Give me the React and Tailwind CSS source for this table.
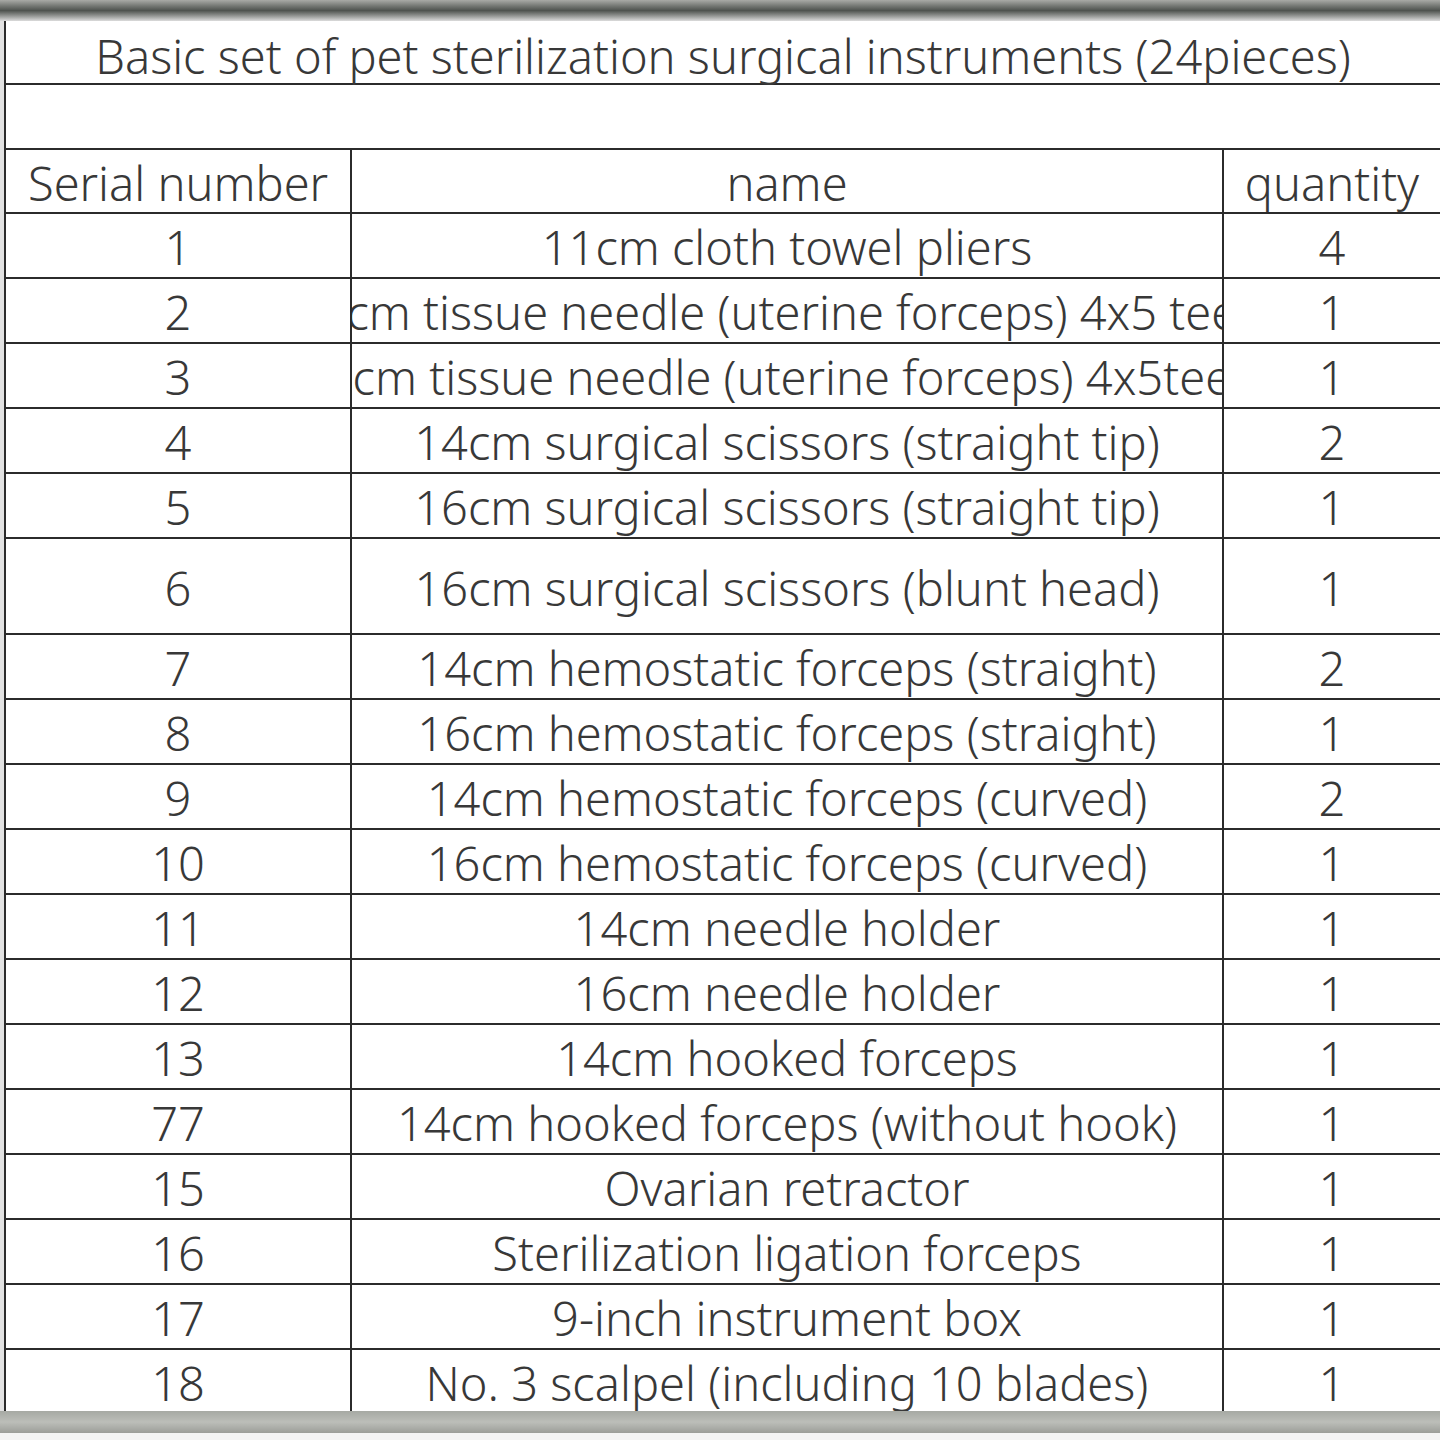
import React from "react";

const rows = [
  ["1", "11cm cloth towel pliers", "4"],
  ["2", "16cm tissue needle (uterine forceps) 4x5 teeth", "1", false, true],
  ["3", "16cm tissue needle (uterine forceps) 4x5teeth", "1", false, true],
  ["4", "14cm surgical scissors (straight tip)", "2"],
  ["5", "16cm surgical scissors (straight tip)", "1"],
  ["6", "16cm surgical scissors (blunt head)", "1", true],
  ["7", "14cm hemostatic forceps (straight)", "2"],
  ["8", "16cm hemostatic forceps (straight)", "1"],
  ["9", "14cm hemostatic forceps (curved)", "2"],
  ["10", "16cm hemostatic forceps (curved)", "1"],
  ["11", "14cm needle holder", "1"],
  ["12", "16cm needle holder", "1"],
  ["13", "14cm hooked forceps", "1"],
  ["77", "14cm hooked forceps (without hook)", "1"],
  ["15", "Ovarian retractor", "1"],
  ["16", "Sterilization ligation forceps", "1"],
  ["17", "9-inch instrument box", "1"],
  ["18", "No. 3 scalpel (including 10 blades)", "1"],
];

export default function App() {
  return (
    <div
      className="w-[1440px] h-[1440px] bg-white overflow-hidden flex flex-col text-[#383838] font-light"
      style={{ fontFamily: '"Noto Sans", "Open Sans", sans-serif' }}
    >
      <div className="h-[21px] shrink-0 bg-gradient-to-b from-[#a9aaa6] via-[#4f534f] to-[#dcdcdc]" />
      <div className="flex flex-1 min-h-0">
        <div className="w-[4px] bg-[#e2e2e2] shrink-0" />
        <div className="flex-1 flex flex-col border-l-2 border-[#2b2b2b]">
          <div className="h-[64px] shrink-0 flex items-center justify-center border-b-2 border-[#2b2b2b] text-[47px] leading-none pt-[8px]">
            Basic set of pet sterilization surgical instruments (24pieces)
          </div>
          <div className="h-[65px] shrink-0 border-b-2 border-[#2b2b2b]" />
          <div className="h-[64px] shrink-0 flex border-b-2 border-[#2b2b2b] text-[47px] leading-none">
            <div className="w-[346px] shrink-0 flex items-center pl-[22px] border-r-2 border-[#2b2b2b] pt-[4px]">Serial number</div>
            <div className="w-[872px] shrink-0 flex items-center justify-center border-r-2 border-[#2b2b2b] pt-[4px]">name</div>
            <div className="flex-1 flex items-center justify-center whitespace-nowrap pt-[4px]">quantity</div>
          </div>
          {rows.map(([n, name, q, tall, clip], i) => (
            <div
              key={i}
              className={
                (tall ? "h-[96px] " : "h-[65px] ") +
                "shrink-0 flex border-b-2 border-[#2b2b2b] text-[47px] leading-none"
              }
            >
              <div className="w-[346px] shrink-0 flex items-center justify-center border-r-2 border-[#2b2b2b] pt-[4px]">{n}</div>
              <div
                className={
                  (clip ? "overflow-x-clip " : "") +
                  "w-[872px] shrink-0 flex items-center justify-center border-r-2 border-[#2b2b2b] whitespace-nowrap pt-[4px]"
                }
              >
                <span className="shrink-0">{name}</span>
              </div>
              <div className="flex-1 flex items-center justify-center pt-[4px]">{q}</div>
            </div>
          ))}
        </div>
      </div>
      <div className="h-[22px] shrink-0 bg-gradient-to-b from-[#a6a9a3] via-[#bcbeb9] to-[#9c9e99]" />
      <div className="h-[7px] shrink-0 bg-[#f4f4f4]" />
    </div>
  );
}
